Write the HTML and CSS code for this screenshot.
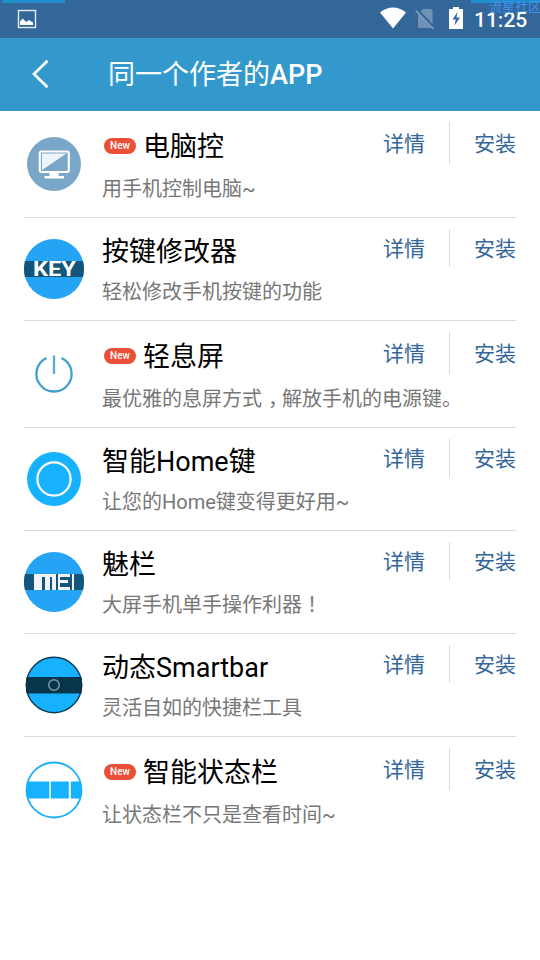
FILE: index.html
```html
<!DOCTYPE html>
<html lang="zh-CN">
<head>
<meta charset="utf-8">
<title>同一个作者的APP</title>
<link rel="stylesheet" href="styles.css">
</head>
<body>
<div class="status">
  <span class="strip strip-left"></span><span class="strip strip-right"></span>
  <svg class="picture" width="20" height="20" viewBox="0 0 20 20"><rect x="1.5" y="1.5" width="17" height="17" fill="none" stroke="#e5edf4" stroke-width="1.4"/><path d="M3 16V12.500L5.700 9.500 9 13l3-2 4 2.500V16Z" fill="#fff"/></svg>
  <div class="status-right">
    <svg class="wifi" width="26" height="22" viewBox="0 0 26 22"><path d="M0 5.500Q13-4.500 26 5.500L13 21.500Z" fill="#fff"/></svg>
    <svg class="sim" width="20" height="22" viewBox="0 0 20 22"><path d="M3 6 8 1H16Q17.500 1 17.500 2.500V18Q17.500 20 16 20H5Q3 20 3 18Z" fill="#7092b6"/><path d="M1.600 1.300 19 20" stroke="#336699" stroke-width="3"/><path d="M.7 2.500 18.500 21" stroke="#7f9dbd" stroke-width="1.600"/></svg>
    <svg class="battery" width="14" height="22" viewBox="0 0 14 22"><path d="M0 2H4V0H10V2H14V22H0Z" fill="#fff"/><path d="M8.500 5 3.500 12.500H6.700L5.500 18.500 11 10.500H7.500Z" fill="#336699"/></svg>
    <span class="clock">11:25</span>
  </div>
  <span class="mark">流星社区</span>
</div>
<header class="bar">
  <svg class="back" width="20" height="30" viewBox="0 0 20 30"><path d="M16.500 1.800 3 15 16.500 28.200" fill="none" stroke="#fff" stroke-width="2.700"/></svg>
  <h1>同一个作者的<b>APP</b></h1>
</header>
<main class="list">
  <section class="row tall">
    <svg class="icon" viewBox="0 0 60 60"><circle cx="30" cy="30" r="27" fill="#7aa7c7"/><rect x="15.800" y="17.500" width="29" height="20.500" rx="2" fill="none" stroke="#fff" stroke-width="2.200"/><path d="M18 19.500H42.500L18 36Z" fill="#eef4f8"/><path d="M25.500 39h9v3h5.500v2.500H20.500V42h5Z" fill="#fff"/></svg>
    <div class="info"><div class="name"><span class="new">New</span><h2>电脑控</h2></div><p>用手机控制电脑~</p></div>
    <div class="actions"><a>详情</a><a>安装</a></div>
  </section>
  <section class="row">
    <svg class="icon" viewBox="0 0 60 60"><circle cx="30" cy="30" r="30" fill="#25a3f4"/><path d="M1 22H59Q61 30 59 38H1Q-1 30 1 22Z" fill="#14557b"/><text class="key" x="9" y="37" textLength="43" lengthAdjust="spacingAndGlyphs">KEY</text></svg>
    <div class="info"><div class="name"><h2>按键修改器</h2></div><p>轻松修改手机按键的功能</p></div>
    <div class="actions"><a>详情</a><a>安装</a></div>
  </section>
  <section class="row tall">
    <svg class="icon" viewBox="0 0 60 60"><path d="M22.500 14A17.600 17.600 0 1 0 37.500 14" fill="none" stroke="#409fce" stroke-width="2.300"/><path d="M30 11.500V30" stroke="#5badd5" stroke-width="2.300"/></svg>
    <div class="info"><div class="name"><span class="new">New</span><h2>轻息屏</h2></div><p>最优雅的息屏方式<span class="comma">，</span>解放手机的电源键。</p></div>
    <div class="actions"><a>详情</a><a>安装</a></div>
  </section>
  <section class="row">
    <svg class="icon" viewBox="0 0 60 60"><circle cx="30" cy="30" r="27" fill="#16b2ff"/><circle cx="30" cy="30" r="16.600" fill="none" stroke="#fff" stroke-width="2.200"/></svg>
    <div class="info"><div class="name"><h2>智能Home键</h2></div><p>让您的Home键变得更好用~</p></div>
    <div class="actions"><a>详情</a><a>安装</a></div>
  </section>
  <section class="row">
    <svg class="icon" viewBox="0 0 60 60"><circle cx="30" cy="30" r="30" fill="#25a3f4"/><path d="M1 22H59Q61 30 59 38H1Q-1 30 1 22Z" fill="#14557b"/><path d="M10 22H32V38H28V25H26V38H21V25H18V38H10ZM34 22H46V25H36V28H44V31H36V35H46V38H34ZM48 22H50V38H48Z" fill="#f1f5fa"/></svg>
    <div class="info"><div class="name"><h2>魅栏</h2></div><p>大屏手机单手操作利器<span class="mid" lang="zh-TW">！</span></p></div>
    <div class="actions"><a>详情</a><a>安装</a></div>
  </section>
  <section class="row">
    <svg class="icon" viewBox="0 0 60 60"><circle cx="30" cy="30" r="27.700" fill="#16b2ff" stroke="#093b53" stroke-width="1.400"/><path d="M2.500 22H57.500Q59 30 57.500 38.500H2.500Q1 30 2.500 22Z" fill="#07364c"/><circle cx="30" cy="30" r="5.300" fill="none" stroke="#8296a3" stroke-width="1.500"/></svg>
    <div class="info"><div class="name"><h2>动态Smartbar</h2></div><p>灵活自如的快捷栏工具</p></div>
    <div class="actions"><a>详情</a><a>安装</a></div>
  </section>
  <section class="row tall">
    <svg class="icon" viewBox="0 0 60 60"><circle cx="30" cy="30" r="27.500" fill="#fff" stroke="#1eb1fb" stroke-width="1.800"/><path d="M3.500 21.500H25.300V38.500H3.500Q1.500 30 3.500 21.500ZM26.800 21.500H44.800V38.500H26.800ZM46.800 21.500H56.500Q58.500 30 56.500 38.500H46.800Z" fill="#16b2ff"/></svg>
    <div class="info"><div class="name"><span class="new">New</span><h2>智能状态栏</h2></div><p>让状态栏不只是查看时间~</p></div>
    <div class="actions"><a>详情</a><a>安装</a></div>
  </section>
</main>
</body>
</html>
```
FILE: styles.css
```css
* { box-sizing: border-box; }
body { margin: 0; background: #fff; font-family: Roboto, "Noto Sans CJK SC", sans-serif; height: 960px; overflow: hidden; }
h1, h2, p { margin: 0; font-weight: 400; white-space: nowrap; }
.status { height: 38px; background: #336699; display: flex; justify-content: space-between; position: relative; overflow: hidden; }
.strip { position: absolute; top: 0; height: 3px; background: #208dcd; }
.strip-left { left: 2px; width: 63px; }
.strip-right { right: 0; width: 69px; }
.picture { margin: 9px 0 0 17px; }
.status-right { display: flex; padding-right: 12px; }
.wifi { margin: 7px 9px 0 0; }
.sim { margin: 8px 14px 0 0; }
.battery { margin: 7px 11px 0 0; }
.clock { color: #fff; font-size: 21px; line-height: 40px; font-weight: 500; width: 54px; }
.mark { position: absolute; right: -1px; top: -1px; font-size: 13px; line-height: 15px; color: #3d94f0; }
.bar { height: 73px; background: #3399cd; display: flex; align-items: center; padding-left: 31px; }
.back { flex: none; margin-top: -1px; }
.bar h1 { color: #fff; font-size: 27px; line-height: 36px; margin-left: 57px; }
.bar b { font-weight: 500; }
.list { padding: 0 24px; }
.row { height: 103px; border-bottom: 1px solid #d9d9d9; display: flex; align-items: center; }
.row.tall { height: 107px; }
.row:last-child { border-bottom-color: transparent; }
.icon { width: 60px; height: 60px; flex: none; }
.info { flex: 1; min-width: 0; align-self: flex-start; padding: 11px 0 0 18px; }
.name { display: flex; align-items: center; height: 44px; }
.tall .name { height: 48px; }
.name h2 { color: #000; font-size: 27px; line-height: 40px; padding-top: 2px; }
.new { width: 32px; height: 16px; margin: 0 7px 0 2px; border-radius: 8px; background: #eb4f38; color: #fff; font-size: 10px; line-height: 16px; font-weight: 500; text-align: center; }
.info p { color: #777; font-size: 20px; line-height: 36px; padding-top: 1px; }
.mid { font-family: "Noto Sans CJK TC", sans-serif; line-height: 1; }
.comma { padding-left: 6px; margin-right: -6px; }
.actions { align-self: flex-start; display: flex; margin-top: 11px; }
.actions a { height: 38px; line-height: 40px; font-size: 21px; color: #336699; }
.tall .actions a { height: 42px; line-height: 44px; }
.actions a + a { border-left: 1px solid #d9d9d9; margin-left: 24px; padding-left: 24px; }
.key { font: 700 21px Roboto, sans-serif; fill: #fff; }
```
